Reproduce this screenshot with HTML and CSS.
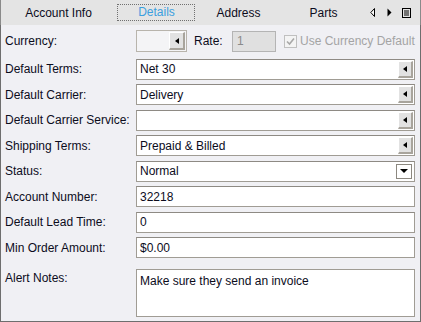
FILE: index.html
```html
<!DOCTYPE html>
<html>
<head>
<meta charset="utf-8">
<link rel="stylesheet" href="styles.css">
</head>
<body>
<div class="window">
  <div class="tabbar">
    <div class="tab t1">Account Info</div>
    <div class="tab t2"><span class="focus">Details</span></div>
    <div class="tab t3">Address</div>
    <div class="tab t4">Parts</div>
    <div class="navs">
      <svg class="nav-l" width="5" height="9" viewBox="0 0 5 9"><path d="M4.5 0.5 L0.8 4.5 L4.5 8.5 Z" fill="#fff" stroke="#000" stroke-width="1"/></svg>
      <svg class="nav-r" width="5" height="9" viewBox="0 0 5 9"><path d="M0.5 0.5 L4.5 4.5 L0.5 8.5 Z" fill="#000"/></svg>
      <svg class="nav-m" width="9" height="10" viewBox="0 0 9 10"><rect x="0.5" y="0.5" width="8" height="9" fill="none" stroke="#000"/><path d="M2 3H7M2 5H7M2 7H7" stroke="#000"/></svg>
    </div>
  </div>
  <div class="panel">
    <div class="row first">
      <div class="label">Currency:</div>
      <div class="field-line">
        <div class="combo small"><span class="btn"><i class="tri-left"></i></span></div>
        <span class="rate-label">Rate:</span>
        <div class="rate">1</div>
        <span class="check"><svg width="11" height="11" viewBox="0 0 11 11"><path d="M2 5.5 L4.5 8 L9 2.5" fill="none" stroke="#a8a8a8" stroke-width="1.6"/></svg></span>
        <span class="check-label">Use Currency Default</span>
      </div>
    </div>
    <div class="row">
      <div class="label">Default Terms:</div>
      <div class="combo">Net 30<span class="btn"><i class="tri-left"></i></span></div>
    </div>
    <div class="row">
      <div class="label">Default Carrier:</div>
      <div class="combo">Delivery<span class="btn"><i class="tri-left"></i></span></div>
    </div>
    <div class="row">
      <div class="label">Default Carrier Service:</div>
      <div class="combo"><span class="btn"><i class="tri-left"></i></span></div>
    </div>
    <div class="row">
      <div class="label">Shipping Terms:</div>
      <div class="combo">Prepaid &amp; Billed<span class="btn"><i class="tri-left"></i></span></div>
    </div>
    <div class="row">
      <div class="label">Status:</div>
      <div class="combo">Normal<span class="btn2"><i class="tri-down"></i></span></div>
    </div>
    <div class="row">
      <div class="label">Account Number:</div>
      <div class="combo">32218</div>
    </div>
    <div class="row">
      <div class="label">Default Lead Time:</div>
      <div class="combo">0</div>
    </div>
    <div class="row">
      <div class="label">Min Order Amount:</div>
      <div class="combo">$0.00</div>
    </div>
    <div class="row notes-row">
      <div class="label">Alert Notes:</div>
      <div class="notes">Make sure they send an invoice</div>
    </div>
  </div>
</div>
</body>
</html>
```
FILE: styles.css
```css
html, body {
  margin: 0;
  padding: 0;
}
body {
  font-family: "Liberation Sans", Arial, sans-serif;
  font-size: 12px;
  color: #0c0c1c;
  background: #ffffff;
}
.window {
  width: 421px;
  height: 322px;
  display: flex;
  flex-direction: column;
}
.tabbar {
  height: 25px;
  flex: none;
  background: #e4e4e4;
  display: flex;
  align-items: center;
  box-sizing: border-box;
  border-left: 1px solid #8a8a8a;
  border-right: 1px solid #8a8a8a;
}
.tab {
  display: flex;
  justify-content: center;
  align-items: center;
  height: 100%;
}
.t1 { width: 115px; }
.t2 { width: 80px; }
.t3 { width: 85px; }
.t4 { width: 85px; }
.focus {
  color: #3c9fdf;
  border: 1px dotted #707070;
  padding: 1px 19px 1px 20px;
  line-height: 13px;
}
.navs {
  flex: 1;
  display: flex;
  align-items: center;
  padding-left: 4px;
}
.nav-r { margin-left: 12px; }
.nav-m { margin-left: 10px; }
.panel {
  flex: 1;
  background: #f0f0f4;
  border: 1px solid #6e6e6e;
  border-top: none;
  padding: 5px 5px 0 4px;
  display: flex;
  flex-direction: column;
  gap: 4.5px;
}
.row {
  display: flex;
  align-items: center;
  height: 21px;
}
.row.first {
  height: 22px;
  margin-bottom: 2px;
}
.label {
  width: 131px;
  flex: none;
}
.combo {
  flex: 1;
  height: 21px;
  box-sizing: border-box;
  background: #ffffff;
  border: 1px solid #a09c94;
  border-top-color: #8e8a84;
  padding-left: 3px;
  display: flex;
  align-items: center;
  position: relative;
}
.btn {
  position: absolute;
  right: 1px;
  top: 1px;
  bottom: 1px;
  width: 15px;
  background: #e2e2e2;
  box-sizing: border-box;
  border-right: 2px solid #a8a49c;
  border-bottom: 2px solid #a8a49c;
  border-left: 1px solid #ffffff;
  border-top: 1px solid #ffffff;
  display: flex;
  align-items: center;
  justify-content: center;
}
.tri-left {
  width: 0;
  height: 0;
  border-top: 3.5px solid transparent;
  border-bottom: 3.5px solid transparent;
  border-right: 4px solid #000;
}
.btn2 {
  position: absolute;
  right: 2px;
  top: 2px;
  bottom: 2px;
  width: 16px;
  box-sizing: border-box;
  border: 1px solid #8c8880;
  background: #fff;
  display: flex;
  align-items: center;
  justify-content: center;
}
.tri-down {
  width: 0;
  height: 0;
  border-left: 4px solid transparent;
  border-right: 4px solid transparent;
  border-top: 4px solid #000;
}
.field-line {
  flex: 1;
  display: flex;
  align-items: center;
  height: 22px;
}
.combo.small {
  flex: none;
  width: 51px;
  height: 22px;
  background: #f4f4f6;
  border-color: #b8b4ac;
}
.combo.small .btn {
  width: 16px;
}
.rate-label {
  margin-left: 7px;
  width: 38px;
}
.rate {
  width: 44px;
  height: 21px;
  box-sizing: border-box;
  background: #e0e0e0;
  border: 1px solid #b4b4b4;
  color: #8a8a8a;
  padding-left: 4px;
  display: flex;
  align-items: center;
}
.check {
  margin-left: 8px;
  width: 13px;
  height: 13px;
  box-sizing: border-box;
  border: 1px solid #c0c0c0;
  background: #f4f4f4;
  display: flex;
  align-items: center;
  justify-content: center;
}
.check-label {
  margin-left: 3px;
  color: #a4a4a4;
  white-space: nowrap;
}
.notes-row {
  height: 48px;
  align-items: flex-start;
  margin-top: 6px;
}
.notes-row .label {
  padding-top: 2px;
}
.notes {
  flex: 1;
  height: 48px;
  box-sizing: border-box;
  background: #fff;
  border: 1px solid #a09c94;
  padding: 4px 3px;
}
```
